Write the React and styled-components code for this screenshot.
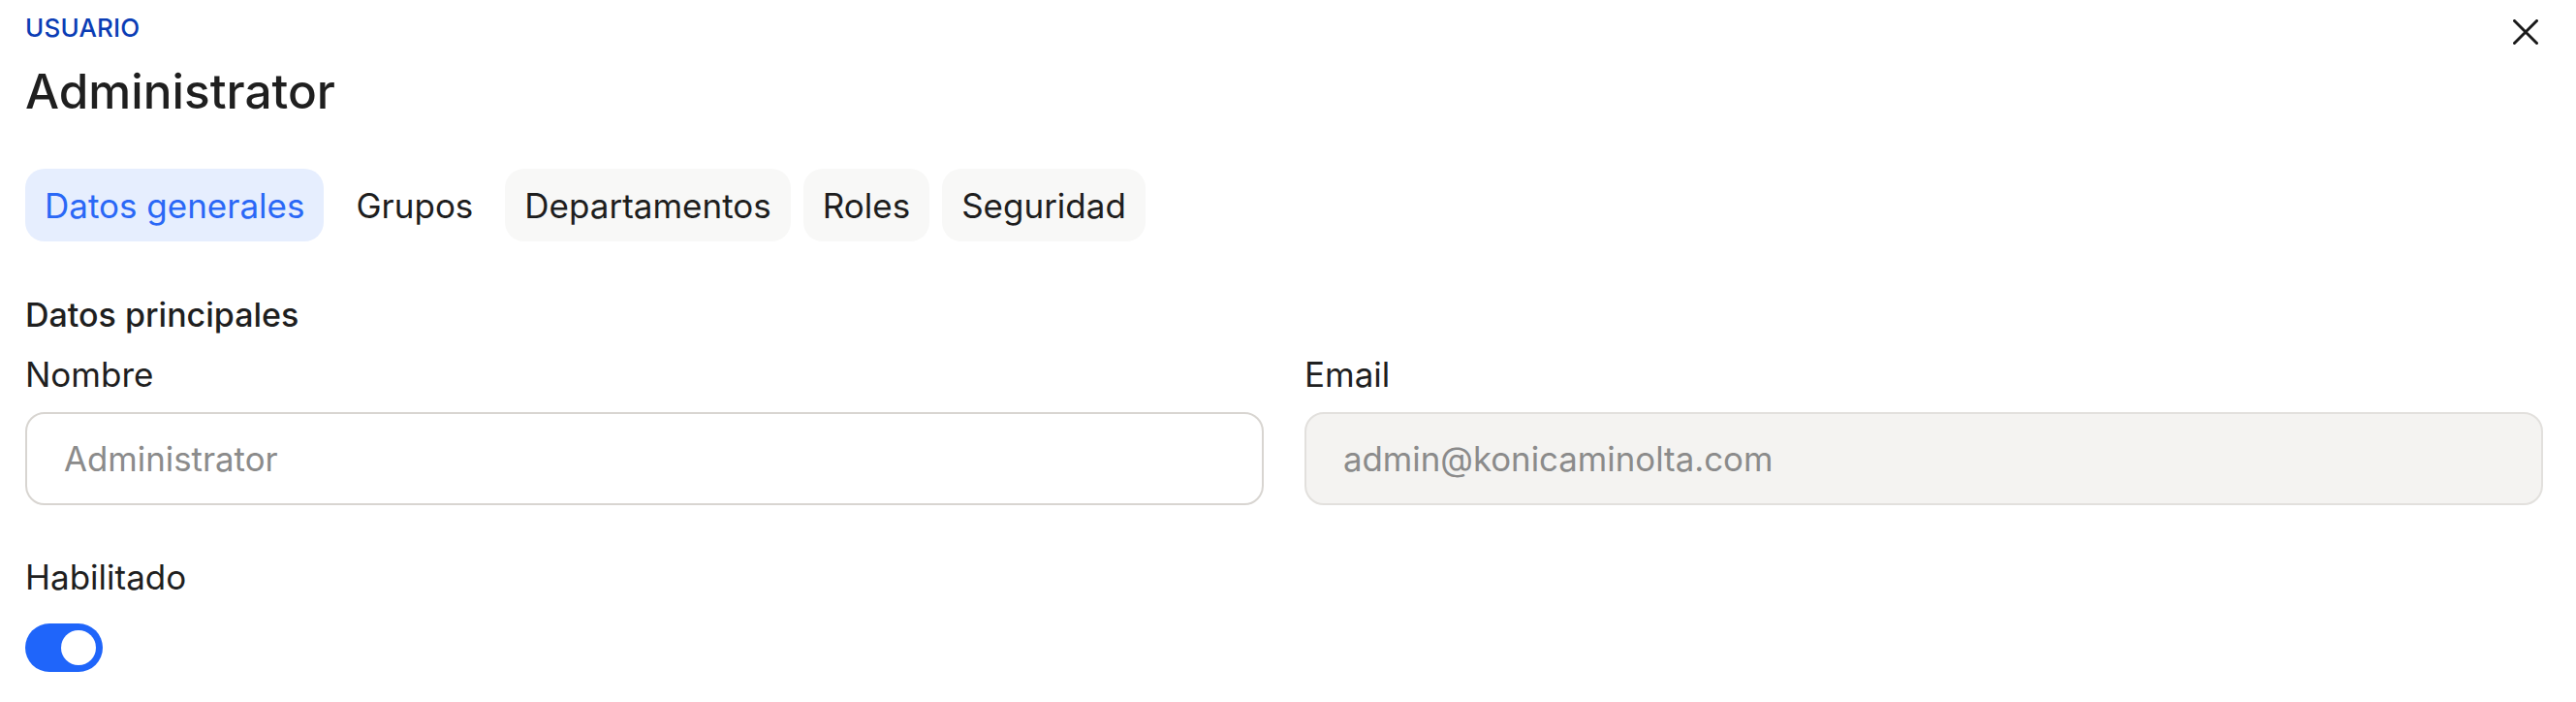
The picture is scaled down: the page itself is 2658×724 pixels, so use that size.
import React from "react";
import styled, { createGlobalStyle } from "styled-components";

const GlobalStyle = createGlobalStyle`
  html, body { margin: 0; padding: 0; background: #ffffff; }
  body { font-family: Inter, "Noto Sans", sans-serif; color: #1f1f1f; }
  * { box-sizing: border-box; }
`;

const Page = styled.div`
  padding: 13px 34px 30px 26px;
  display: flex;
  flex-direction: column;
`;

const Header = styled.header`
  display: flex;
  justify-content: space-between;
  align-items: flex-start;
`;

const TitleBlock = styled.div`
  display: flex;
  flex-direction: column;
  gap: 17px;
`;

const Eyebrow = styled.div`
  font-size: 26px;
  line-height: 32px;
  font-weight: 500;
  color: #0b3db5;
  letter-spacing: 0.2px;
`;

const Title = styled.h1`
  margin: 0;
  font-size: 49.5px;
  line-height: 64px;
  font-weight: 500;
  color: #1f1f1f;
`;

const CloseButton = styled.button`
  border: none;
  background: transparent;
  padding: 0;
  margin: 7px 5px 0 0;
  width: 26px;
  height: 26px;
  display: flex;
  align-items: center;
  justify-content: center;
  cursor: pointer;
  color: #1a1a1a;
`;

const Tabs = styled.nav`
  display: flex;
  gap: 13px;
  margin-top: 48px;
`;

const Tab = styled.button`
  height: 75px;
  padding: 0 20px;
  border: none;
  border-radius: 20px;
  font-family: Inter, "Noto Sans", sans-serif;
  font-size: 35px;
  font-weight: 400;
  display: flex;
  align-items: center;
  cursor: pointer;
  background: ${(p) =>
    p.$active ? "#e6eefe" : p.$plain ? "transparent" : "#f8f8f7"};
  color: ${(p) => (p.$active ? "#2a68f6" : "#1e1e1e")};
`;

const SectionTitle = styled.h2`
  margin: 56px 0 0;
  font-size: 34px;
  line-height: 40px;
  font-weight: 500;
  color: #1f1f1f;
`;

const FieldGrid = styled.div`
  display: grid;
  grid-template-columns: 1fr 1fr;
  column-gap: 42px;
  margin-top: 21px;
`;

const Field = styled.div`
  display: flex;
  flex-direction: column;
  gap: 19px;
`;

const Label = styled.label`
  font-size: 35px;
  line-height: 40px;
  font-weight: 400;
  color: #1f1f1f;
`;

const Input = styled.input`
  height: 96px;
  width: 100%;
  border: 2px solid ${(p) => (p.disabled ? "#e2e0dd" : "#d8d5d1")};
  border-radius: 20px;
  background: ${(p) => (p.disabled ? "#f4f3f1" : "#ffffff")};
  padding: 0 38px;
  font-family: Inter, "Noto Sans", sans-serif;
  font-size: 34.8px;
  color: #1f1f1f;
  outline: none;
  &::placeholder { color: #8b8b8b; opacity: 1; }
`;

const ToggleField = styled.div`
  display: flex;
  flex-direction: column;
  align-items: flex-start;
  gap: 28px;
  margin-top: 54px;
`;

const Switch = styled.button`
  width: 80px;
  height: 50px;
  border-radius: 25px;
  border: none;
  padding: 0 7px;
  background: ${(p) => (p.$on ? "#1f65fa" : "#cfcfcf")};
  display: flex;
  align-items: center;
  justify-content: ${(p) => (p.$on ? "flex-end" : "flex-start")};
  cursor: pointer;
`;

const Knob = styled.span`
  width: 36px;
  height: 36px;
  border-radius: 50%;
  background: #ffffff;
`;

const tabs = ["Datos generales", "Grupos", "Departamentos", "Roles", "Seguridad"];

export default function App() {
  return (
    <>
      <GlobalStyle />
      <Page>
        <Header>
          <TitleBlock>
            <Eyebrow>USUARIO</Eyebrow>
            <Title>Administrator</Title>
          </TitleBlock>
          <CloseButton aria-label="Cerrar">
            <svg width="26" height="26" viewBox="0 0 26 26" fill="none">
              <path d="M1.5 1.5 L24.5 24.5 M24.5 1.5 L1.5 24.5" stroke="currentColor" strokeWidth="3" strokeLinecap="round" />
            </svg>
          </CloseButton>
        </Header>
        <Tabs>
          {tabs.map((t, i) => (
            <Tab key={t} $active={i === 0} $plain={i === 1}>
              {t}
            </Tab>
          ))}
        </Tabs>
        <SectionTitle>Datos principales</SectionTitle>
        <FieldGrid>
          <Field>
            <Label>Nombre</Label>
            <Input placeholder="Administrator" />
          </Field>
          <Field>
            <Label>Email</Label>
            <Input disabled placeholder="admin@konicaminolta.com" />
          </Field>
        </FieldGrid>
        <ToggleField>
          <Label>Habilitado</Label>
          <Switch $on aria-label="Habilitado">
            <Knob />
          </Switch>
        </ToggleField>
      </Page>
    </>
  );
}
